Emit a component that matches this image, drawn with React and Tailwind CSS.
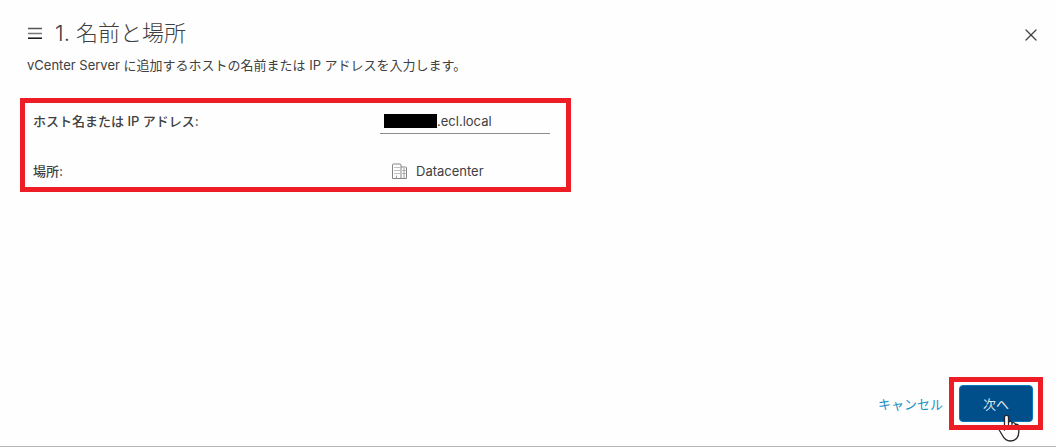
import { X } from 'lucide-react';

function MenuIcon() {
  return (
    <svg viewBox="0 0 16 16" className="h-4 w-4" fill="none" strokeWidth="1.500" aria-hidden="true">
      <path d="M1 3.500h14" stroke="#555" />
      <path d="M1 8.500h14" stroke="#777" />
      <path d="M1 13.200h14" stroke="#111" />
    </svg>
  );
}

function DatacenterIcon() {
  return (
    <svg viewBox="0 0 16 16" className="h-4 w-4 shrink-0" fill="none" stroke="#858585" aria-hidden="true">
      <path d="M.5 15.500V2q0-1 1-1h6.500q1 0 1 1v13.500zM9 4h4.500q1 0 1 1v10.500H9" />
      <path d="M2.500 4.500h5M2.500 7.500h5M2.500 10.500h5M10.500 7.500h3M10.500 10.500h3" strokeDasharray="1 1" />
      <path d="M4.500 15.500v-3M12 5v10" strokeWidth=".8" />
    </svg>
  );
}

function HandCursor() {
  return (
    <svg viewBox="0 0 22 28" className="pointer-events-none absolute top-[37px] left-[49px] h-7 w-[22px]" aria-hidden="true">
      <path
        d="M6.500 16V3C6.500 .800 10.500 .800 10.500 3V8C12 6.800 14 7.500 14 9C15.500 8 17.300 8.800 17.300 10.500C19 9.800 20.800 10.800 20.800 12.500V18C20.800 23.500 17.500 27 12.500 27C8.500 27 6 24.500 4.500 21.500L1.500 16.500C.500 14 3 12.800 4.500 14.200Z"
        fill="#fff"
        stroke="#26262c"
        strokeWidth="1.300"
        strokeLinejoin="round"
      />
      <path d="M10.500 8v5M14 9v4M17.300 10.500v3" stroke="#26262c" strokeWidth="1.200" />
    </svg>
  );
}

export default function App() {
  return (
    <div className="flex min-h-screen flex-col border-b border-[#b4b4b4] bg-[#fefefe] font-['Inter','Noto_Sans_CJK_JP',sans-serif] text-[13px] leading-5 text-[#404040]">
      {/* Header */}
      <header className="flex items-start justify-between pt-[15px] pr-[15px] pl-[27px]">
        <div>
          <div className="flex h-9 items-center gap-3">
            <button type="button" aria-label="メニュー">
              <MenuIcon />
            </button>
            <h1 className="text-[22px] leading-8 font-light">1. 名前と場所</h1>
          </div>
          <p className="mt-1">vCenter Server に追加するホストの名前または IP アドレスを入力します。</p>
        </div>
        <button type="button" aria-label="閉じる" className="mt-[10px]">
          <X className="h-5 w-5" strokeWidth={1.500} />
        </button>
      </header>

      {/* Form */}
      <main className="flex-1 px-5 pt-[23px]">
        <div className="grid w-full max-w-[551px] grid-cols-[347px_minmax(0,1fr)] gap-y-[25px] border-5 border-[#ee1c25] px-2 pt-[5px] pb-1">
          <label htmlFor="host" className="self-center font-medium">
            ホスト名または IP アドレス:
          </label>
          <div className="mr-2 flex h-[26px] items-center border-b border-[#8c8c8c] pl-1">
            <span className="h-[14px] w-[53px] shrink-0 bg-black" />
            <input id="host" type="text" defaultValue=".ecl.local" className="min-w-0 flex-1 outline-none" />
          </div>
          <span className="self-center font-medium">場所:</span>
          <div className="flex h-6 items-center gap-2 pl-3">
            <DatacenterIcon />
            <span>Datacenter</span>
          </div>
        </div>
      </main>

      {/* Actions */}
      <footer className="flex items-center justify-end gap-[6px] pr-[13px] pb-4">
        <button type="button" className="text-[#1a8fc4]">
          キャンセル
        </button>
        <div className="relative h-[53px] w-[94px] px-[10px] pt-2">
          <button
            type="button"
            className="h-[37px] w-full rounded border border-[#0079b8] bg-[#004f8a] text-[#dce8f0]"
          >
            次へ
          </button>
          <HandCursor />
          <div className="pointer-events-none absolute inset-0 border-5 border-[#ee1c25]" />
        </div>
      </footer>
    </div>
  );
}
